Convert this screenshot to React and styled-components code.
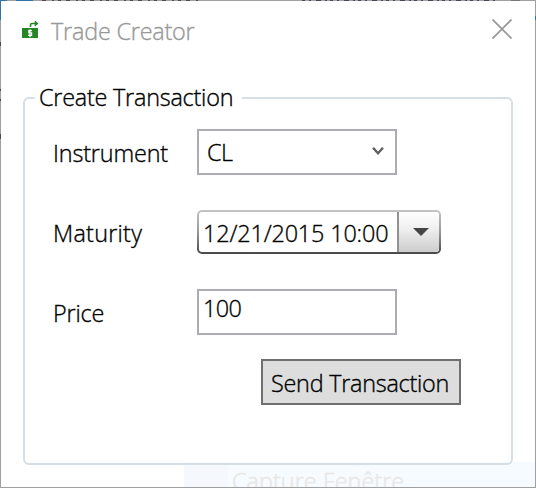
import React from "react";
import styled, { createGlobalStyle } from "styled-components";

const GlobalStyle = createGlobalStyle`
  *, *::before, *::after { box-sizing: border-box; }
  body { margin: 0; background: #fff; overflow: hidden; }
`;

const Window = styled.main`
  position: relative;
  isolation: isolate;
  width: 536px;
  height: 488px;
  border: 1px solid #a0a0a0;
  background: #fff;
  color: #000;
  font: 300 23.4px/30px "Open Sans", "Noto Sans", sans-serif;
  -webkit-text-stroke: 0.35px currentColor;
`;

const Text = styled.span`
  display: block;
  white-space: nowrap;
  letter-spacing: ${(p) => p.$track || 0}px;
`;

const Label = styled(Text)`
  padding-top: 2px;
`;

const TitleBar = styled.header`
  display: flex;
  align-items: center;
  height: 58px;
  padding: 0 23px 0 21px;
  color: #999;
`;

const Title = styled(Text)`
  flex: 1;
  margin-left: 12px;
  padding-top: 1px;
`;

const CloseButton = styled.button`
  display: flex;
  margin-top: -2px;
  padding: 0;
  border: 0;
  background: none;
`;

const Group = styled.fieldset`
  width: 490px;
  height: 382px;
  margin: 24px 0 0 22px;
  padding: 16px 0 0 10px;
  border: 2px solid #d5dfe5;
  border-radius: 6px;
`;

const Legend = styled.legend`
  width: 207px;
  height: 30px;
  padding: 0 4px;
  line-height: 28px;
`;

const Form = styled.div`
  display: grid;
  grid-template-columns: 144px 1fr;
  grid-auto-rows: 46px;
  row-gap: 34px;
  align-items: center;
  padding-left: 18px;
`;

const Field = styled.div`
  display: flex;
  align-items: ${(p) => (p.$top ? "flex-start" : "center")};
  justify-content: space-between;
  width: 200px;
  height: 46px;
  padding: ${(p) => (p.$top ? "2px 4px" : "0 11px 0 8px")};
  border: 2px solid #abadb3;
  background: #fff;
`;

const DateField = styled.div`
  display: flex;
  width: 244px;
  height: 44px;
  border: 2px solid transparent;
  border-radius: 5px;
  background: linear-gradient(#fff, #fff) padding-box,
    linear-gradient(#c4c4c4, #999 50%, #484848) border-box;
`;

const DateValue = styled.div`
  width: 198px;
  padding: 6px 0 0 4px;
`;

const DropButton = styled.button`
  display: grid;
  place-items: center;
  flex: 1;
  padding: 0 0 0 4px;
  border: 0;
  border-left: 2px solid #929292;
  border-radius: 0 3px 3px 0;
  background: linear-gradient(#fff, #f0f0f0 40%, #cdcdcd);
`;

const SendButton = styled.button`
  display: block;
  width: 200px;
  height: 46px;
  margin: 24px 0 0 226px;
  padding: 2px 0 0 8px;
  border: 2px solid #707070;
  background: #ddd;
  color: #000;
  font: inherit;
  text-align: left;
`;

const Backdrop = styled.div`
  position: absolute;
  z-index: -1;
  left: 183px;
  right: 0;
  bottom: 0;
  height: 25px;
  padding: 4px 0 0 48px;
  background: linear-gradient(90deg, #f5f9fe 44px, #f5fbfe 44px);
  color: #e9e6e6;
  overflow: hidden;
`;

const EdgeDetail = styled.svg`
  position: absolute;
  top: -1px;
  left: -1px;
  pointer-events: none;
`;

function MoneyIcon() {
  return (
    <svg width="17" height="18" viewBox="0 0 17 18">
      <path d="M0 7h16v10H0z" fill="#278529" />
      <path d="M8.5 6V3.8Q8.5 2.5 10 2.5h5M12.8 0.4 15.2 2.5l-2.4 2.1" fill="none" stroke="#278529" strokeWidth="1.6" />
      <path d="M9.9 9.6H6.8v2.2h2.8v2.6H6.1M8 8.2v8" fill="none" stroke="#fff" strokeWidth="1.2" />
    </svg>
  );
}

/* Slivers of the windows behind that show through the one-pixel frame. */
function FrameEdges() {
  return (
    <EdgeDetail width="536" height="488" fill="none" shapeRendering="crispEdges">
      <path d="M0 .5h7M16 .5h17M.5 0v20" stroke="#2f74aa" />
      <path d="M42 .5h156" stroke="#4f4a50" strokeDasharray="4 6 2 4 3 5" />
      <path d="M302 .5h193" stroke="#4b4658" strokeDasharray="3 4 2 5 5 4 2 3" />
      <path d="M511 .5h9" stroke="#777" />
      <path d="M.5 42v4M.5 89v2M.5 99v2M.5 134v5" stroke="#4a4a50" />
      <path d="M535.5 16v4" stroke="#2f74aa" />
    </EdgeDetail>
  );
}

export default function App() {
  return (
    <>
      <GlobalStyle />
      <Window>
        <TitleBar>
          <MoneyIcon />
          <Title $track={-0.2}>Trade Creator</Title>
          <CloseButton aria-label="Close">
            <svg width="20" height="20" viewBox="0 0 20 20">
              <path d="m.5.5 19 19m0-19-19 19" stroke="#999" strokeWidth="1.8" />
            </svg>
          </CloseButton>
        </TitleBar>
        <Group>
          <Legend><Text $track={-0.22}>Create Transaction</Text></Legend>
          <Form>
            <Label $track={-0.15}>Instrument</Label>
            <Field>
              <Text $track={-0.5}>CL</Text>
              <svg width="12" height="10" viewBox="0 0 12 10">
                <path d="m1 .8 5 5.4 5-5.4" fill="none" stroke="#606060" strokeWidth="2.4" />
              </svg>
            </Field>
            <Label $track={0.25}>Maturity</Label>
            <DateField>
              <DateValue><Text $track={-0.15}>12/21/2015 10:00</Text></DateValue>
              <DropButton aria-label="Open calendar">
                <svg width="16" height="8" viewBox="0 0 16 8"><path d="M0 0h16L8 8z" fill="#444" /></svg>
              </DropButton>
            </DateField>
            <Label $track={-0.2}>Price</Label>
            <Field $top><Text $track={-0.6}>100</Text></Field>
          </Form>
          <SendButton><Text $track={-0.25}>Send Transaction</Text></SendButton>
        </Group>
        <Backdrop><Text $track={0.05}>Capture Fenêtre</Text></Backdrop>
        <FrameEdges />
      </Window>
    </>
  );
}
